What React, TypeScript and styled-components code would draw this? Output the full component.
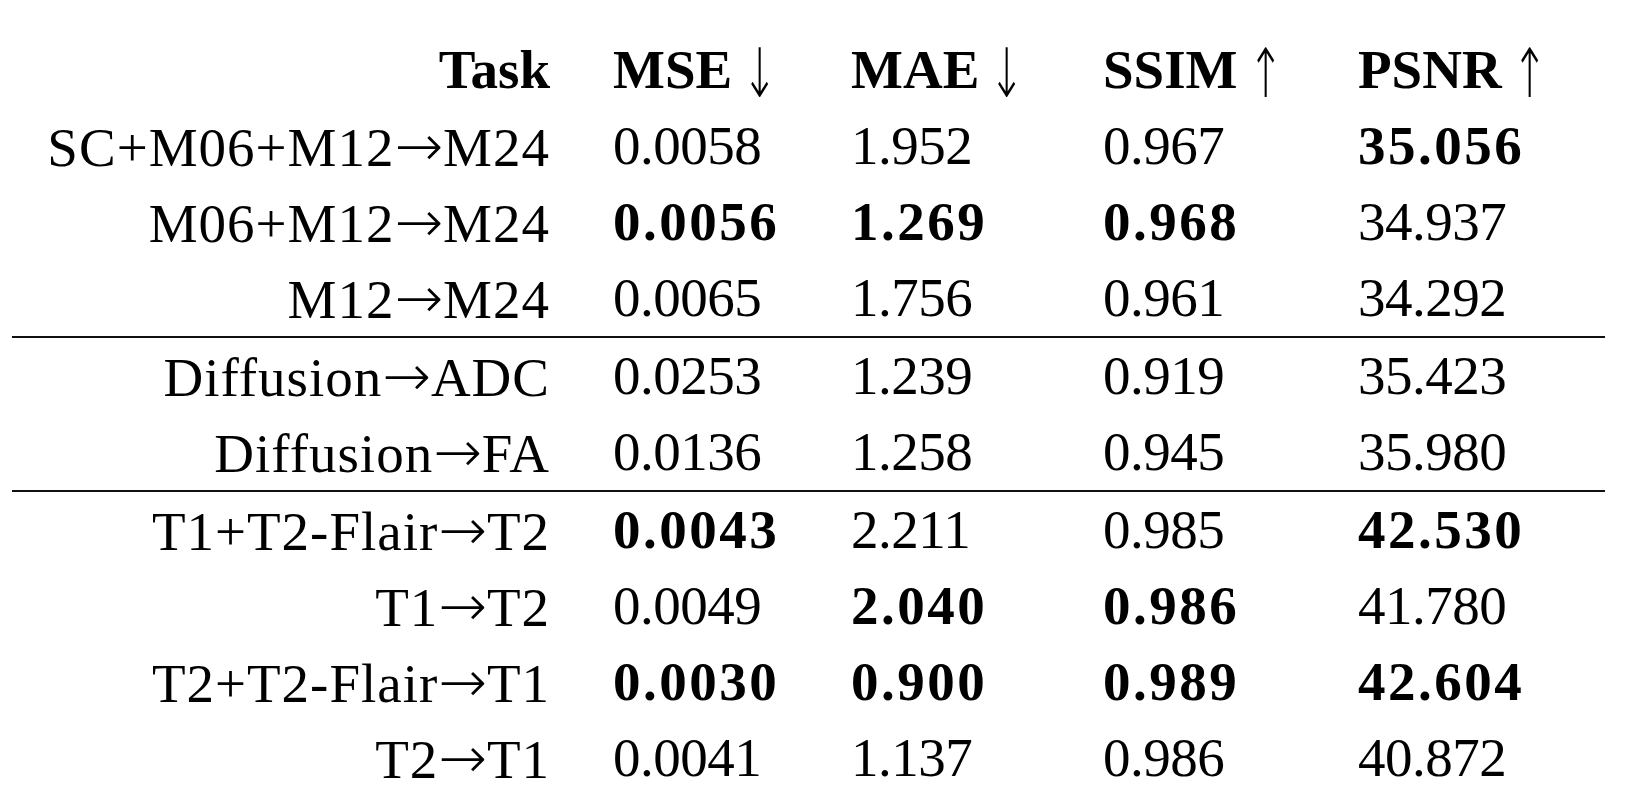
import styled, { createGlobalStyle } from 'styled-components';

const GlobalStyle = createGlobalStyle`
  html, body {
    margin: 0;
    padding: 0;
    background: #ffffff;
  }
`;

const Page = styled.main`
  padding: 32px 0 0 12px;
  font-family: 'Liberation Serif', 'Times New Roman', serif;
  font-size: 55px;
  color: #000;
`;

const Table = styled.section`
  width: 1593px;
  display: flex;
  flex-direction: column;
`;

// task column (right aligned), then the four metric columns
const Row = styled.div<{ $ruled?: boolean; $head?: boolean }>`
  display: grid;
  grid-template-columns: 601px 238px 252px 255px 1fr;
  height: 76px;
  line-height: 76px;
  white-space: nowrap;
  font-weight: ${p => (p.$head ? 700 : 400)};
  border-top: ${p => (p.$ruled ? '2px solid #111' : 'none')};

  & > :first-child {
    text-align: right;
    padding-right: 63px;
  }
`;

const HeadCell = styled.span``;

const Arrow = styled.span`
  display: inline-block;
  font-family: 'DejaVu Sans', sans-serif;
  font-weight: 200;
  font-size: 68px;
  line-height: 1;
  margin-left: 10px;
  vertical-align: -9px;
  transform: scaleX(0.62);
  transform-origin: left center;
`;

const Task = styled.span`
  letter-spacing: 1px;
`;

const Link = styled.span`
  font-family: 'DejaVu Sans', sans-serif;
  font-size: 58px;
  font-weight: 200;
  letter-spacing: 0;
`;

const Value = styled.span<{ $bold?: boolean }>`
  font-weight: ${p => (p.$bold ? 700 : 400)};
  letter-spacing: ${p => (p.$bold ? '2.5px' : '-0.5px')};
`;

type Metric = [string, boolean];
type Result = { task: string; metrics: Metric[] };

const groups: Result[][] = [
  [
    { task: 'SC+M06+M12→M24', metrics: [['0.0058', false], ['1.952', false], ['0.967', false], ['35.056', true]] },
    { task: 'M06+M12→M24', metrics: [['0.0056', true], ['1.269', true], ['0.968', true], ['34.937', false]] },
    { task: 'M12→M24', metrics: [['0.0065', false], ['1.756', false], ['0.961', false], ['34.292', false]] },
  ],
  [
    { task: 'Diffusion→ADC', metrics: [['0.0253', false], ['1.239', false], ['0.919', false], ['35.423', false]] },
    { task: 'Diffusion→FA', metrics: [['0.0136', false], ['1.258', false], ['0.945', false], ['35.980', false]] },
  ],
  [
    { task: 'T1+T2-Flair→T2', metrics: [['0.0043', true], ['2.211', false], ['0.985', false], ['42.530', true]] },
    { task: 'T1→T2', metrics: [['0.0049', false], ['2.040', true], ['0.986', true], ['41.780', false]] },
    { task: 'T2+T2-Flair→T1', metrics: [['0.0030', true], ['0.900', true], ['0.989', true], ['42.604', true]] },
    { task: 'T2→T1', metrics: [['0.0041', false], ['1.137', false], ['0.986', false], ['40.872', false]] },
  ],
];

const headers: [string, string][] = [
  ['MSE', '↓'],
  ['MAE', '↓'],
  ['SSIM', '↑'],
  ['PSNR', '↑'],
];

// split on the arrow so it can be set in a font with a proper long arrow
const TaskLabel = ({ text }: { text: string }) => {
  const [from, to] = text.split('→');
  return (
    <Task>
      {from}
      <Link>→</Link>
      {to}
    </Task>
  );
};

export default function App() {
  return (
    <>
      <GlobalStyle />
      <Page>
        <Table>
          <Row $head>
            <HeadCell>Task</HeadCell>
            {headers.map(([name, dir]) => (
              <HeadCell key={name}>
                {name}
                <Arrow>{dir}</Arrow>
              </HeadCell>
            ))}
          </Row>
          {groups.map((group, gi) =>
            group.map((r, ri) => (
              <Row key={r.task} $ruled={gi > 0 && ri === 0}>
                <TaskLabel text={r.task} />
                {r.metrics.map(([v, b], mi) => (
                  <Value key={mi} $bold={b}>
                    {v}
                  </Value>
                ))}
              </Row>
            ))
          )}
        </Table>
      </Page>
    </>
  );
}
